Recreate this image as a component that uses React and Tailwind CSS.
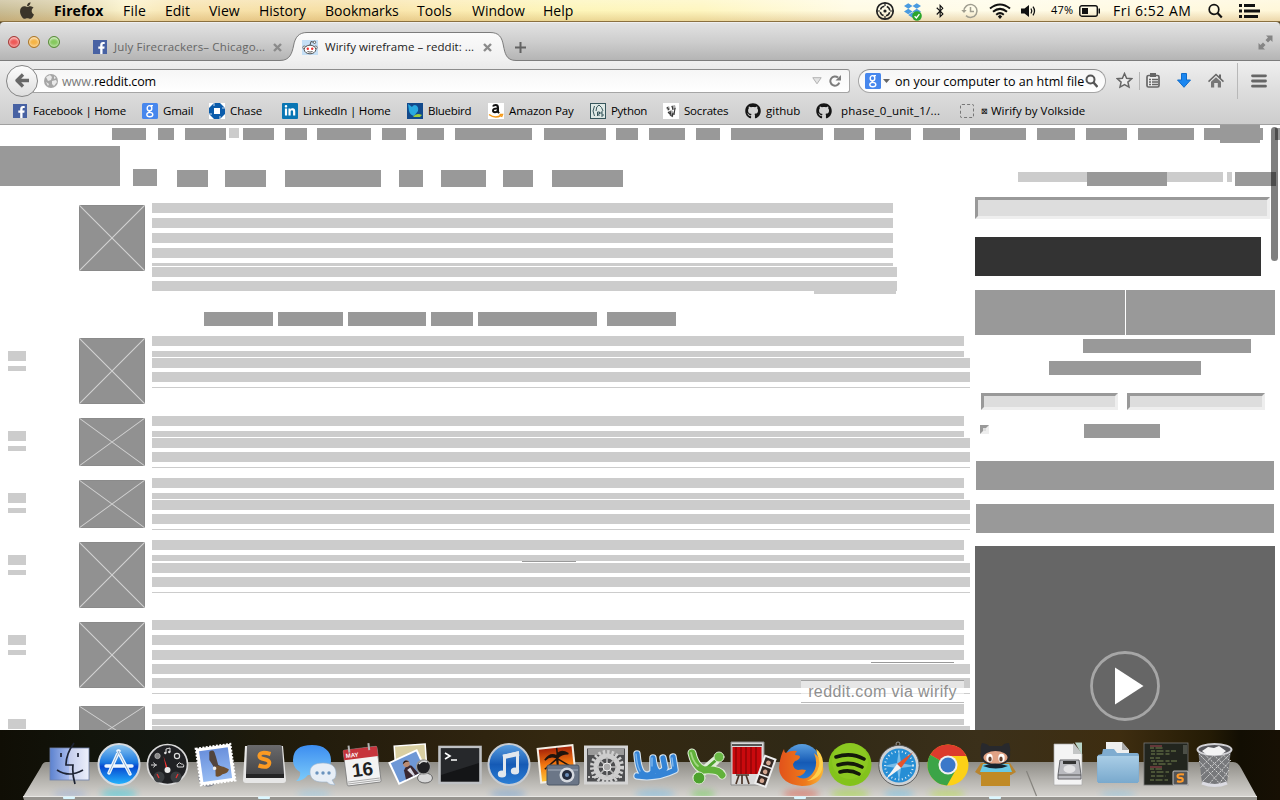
import React from "react";
import { FaApple, FaBluetoothB, FaWifi, FaDropbox, FaGithub, FaFacebookF, FaLinkedinIn } from "react-icons/fa";

/* ---------- menu bar ---------- */

const MENUS = [
  ["Firefox", "w-[69px] font-bold tracking-[0.1px]"],
  ["File", "w-[42px] tracking-[0.2px]"],
  ["Edit", "w-[44px]"],
  ["View", "w-[50px]"],
  ["History", "w-[66px]"],
  ["Bookmarks", "w-[92px]"],
  ["Tools", "w-[55px]"],
  ["Window", "w-[71px]"],
  ["Help", "w-[60px]"],
];

function MenuBar() {
  return (
    <header className="flex h-[22px] shrink-0 items-center border-b border-[#8a7040] bg-[linear-gradient(180deg,rgba(255,255,255,.25),rgba(255,255,255,0)_50%,rgba(180,120,30,.25)),linear-gradient(90deg,#c9bd96_0px,#d8cca4_60px,#fbf3cc_125px,#f7e2ad_190px,#f6dfa4_330px,#fbeab2_430px,#fdf5b9_560px,#fef6c0_700px,#fffbe4_850px,#fffce9_1000px,#fff7d9_1280px)] text-[14px] text-black">
      <FaApple className="ml-[18px] h-[19px] w-[18px] text-[#3b352a]" />
      <nav className="ml-[18px] flex leading-5">
        {MENUS.map(([t, c]) => (
          <span key={t} className={"whitespace-nowrap " + c}>{t}</span>
        ))}
      </nav>
      <div className="ml-auto flex h-full items-center">
        <svg className="h-[20px] w-[20px]" viewBox="0 0 20 20" fill="none" stroke="#222">
          <circle cx="10" cy="10" r="8.2" strokeWidth="1.7" />
          <circle cx="10" cy="10" r="4.800" strokeWidth="1.500" strokeDasharray="5 2.540" strokeDashoffset="-1.270" />
          <path d="M10 2v3M10 15v3M2 10h3M15 10h3" strokeWidth="1.2" />
          <circle cx="10" cy="10" r="1.6" fill="#222" stroke="none" />
        </svg>
        <div className="relative ml-[9px] h-[18px] w-[18px]">
          <FaDropbox className="h-[17px] w-[17px] text-[#4a9be0]" />
          <svg className="absolute right-0 bottom-[-1px] h-[10px] w-[10px]" viewBox="0 0 10 10">
            <circle cx="5" cy="5" r="4.8" fill="#2ca52c" />
            <path d="M2.6 5.2l1.8 1.8 3-3.8" stroke="#fff" strokeWidth="1.3" fill="none" />
          </svg>
        </div>
        <FaBluetoothB className="ml-[13px] h-[14px] w-[10px] text-[#111]" />
        <svg className="ml-[16px] h-[18px] w-[18px]" viewBox="0 0 18 18" fill="none" stroke="#a09e90" strokeWidth="1.5">
          <path d="M3 9a6.5 6.5 0 1 1 2 4.6" />
          <path d="M9.500 5v4.500h3.500" />
          <path d="M.3 8l2.700 3 2.700-3z" fill="#a09e90" stroke="none" />
        </svg>
        <svg className="ml-[10px] h-[16px] w-[22px]" viewBox="0 0 22 16" fill="none" stroke="#111" strokeWidth="2">
          <path d="M1 5.500Q11-2.500 21 5.500M4 8.700Q11 3 18 8.700M7.200 11.700Q11 8.500 14.800 11.700" />
          <path d="M11 11.800l2.200 1.700L11 16l-2.200-2.500z" fill="#111" stroke="none" />
        </svg>
        <svg className="ml-[10px] h-[14px] w-[16px]" viewBox="0 0 16 14">
          <path d="M0 4.500h3.500L8 1v12L3.500 9.500H0z" fill="#111" />
          <path d="M10 4.500q1.600 2.500 0 5M12 2.700q3 4.300 0 8.600" stroke="#111" strokeWidth="1.300" fill="none" />
        </svg>
        <span className="ml-[14px] w-[28px] text-[11px] tracking-[0.2px]">47%</span>
        <svg className="h-[12px] w-[22px]" viewBox="0 0 22 12">
          <rect x=".8" y=".8" width="17.500" height="10.400" rx="2" fill="none" stroke="#111" strokeWidth="1.400" />
          <rect x="3" y="3" width="6" height="6" fill="#111" />
          <path d="M19.500 3.500h1.500v5h-1.500z" fill="#111" />
        </svg>
        <span className="ml-[12px] w-[94px] tracking-[0.5px] whitespace-nowrap">Fri 6:52 AM</span>
        <svg className="h-[16px] w-[16px]" viewBox="0 0 16 16" fill="none" stroke="#111">
          <circle cx="7" cy="6.500" r="4.800" strokeWidth="1.700" />
          <path d="M10.500 10l4.300 4.500" strokeWidth="2.200" />
        </svg>
        <svg className="mr-[20px] ml-[16px] h-[14px] w-[21px]" viewBox="0 0 21 14" fill="#111">
          <path d="M0 0h3v3H0zM0 5.500h3v3H0zM0 11h3v3H0zM5 0h11v3H5zM5 5.500h16v3H5zM5 11h14v3H5z" />
        </svg>
      </div>
    </header>
  );
}

/* ---------- browser chrome ---------- */

function Fb() {
  return (
    <span className="flex h-[14px] w-[14px] shrink-0 items-end justify-end bg-[#4862a3] pr-[1px]">
      <FaFacebookF className="h-[12px] w-[9px] text-white" />
    </span>
  );
}

function GoogleG() {
  return (
    <svg className="h-[16px] w-[16px] shrink-0" viewBox="0 0 16 16">
      <rect width="16" height="16" rx="1.500" fill="#4787ed" />
      <g fill="none" stroke="#fff" strokeWidth="1.400">
        <ellipse cx="7.500" cy="5.200" rx="2.300" ry="2.600" />
        <path d="M8.500 2.600h2.500M8 7.700q-2 1 .3 2" />
        <ellipse cx="7.800" cy="11.600" rx="3" ry="2.200" />
      </g>
    </svg>
  );
}

function CloseX() {
  return (
    <svg className="h-[9px] w-[9px] shrink-0" viewBox="0 0 9 9">
      <path d="M1 1l7 7M8 1L1 8" stroke="#8b8b8b" strokeWidth="2.400" />
    </svg>
  );
}

const Light = ({ c }) => <span className={"h-[12px] w-[12px] rounded-full border shadow-[inset_0_2px_2px_rgba(255,255,255,.6),inset_0_-2px_2px_rgba(255,255,255,.35)] " + c} />;

function TabStrip() {
  return (
    <div className="relative flex h-[39px] shrink-0 rounded-t-[4px] border-t border-[#efefef] bg-[linear-gradient(180deg,#e2e2e2,#cdcdcd_50%,#b3b3b3)] text-[11.500px]">
      <svg className="absolute top-[-1px] left-0 h-[39px] w-[1280px]" viewBox="0 0 1280 39">
        <defs>
          <linearGradient id="tab" x1="0" x2="0" y1="0" y2="1">
            <stop offset="0" stopColor="#fbfbfb" />
            <stop offset="1" stopColor="#efefef" />
          </linearGradient>
        </defs>
        <path
          d="M-2 38.500H280C290 38.500 292 31 293.500 24C295 15 299 10.500 307 10.500H490C499 10.500 502 15 503.500 24C505 31 506 38.500 516 38.500H1282V41H-2Z"
          fill="url(#tab)"
          stroke="#7c7c7c"
        />
      </svg>
      <div className="relative flex w-full items-center">
        <div className="mb-[1px] ml-[8px] flex w-[85px] gap-[8px]">
          <Light c="border-[#a03c38] bg-[#ee5a58]" />
          <Light c="border-[#a8752a] bg-[#f5b445]" />
          <Light c="border-[#5a8a3c] bg-[#86c95e]" />
        </div>
        <div className="mt-[10px] flex w-[209px] items-center">
          <Fb />
          <span className="ml-[7px] w-[159px] tracking-[0.16px] whitespace-nowrap text-[#666]">July Firecrackers– Chicago...</span>
          <CloseX />
        </div>
        <div className="mt-[10px] flex items-center">
          <svg className="h-[15px] w-[16px]" viewBox="0 0 16 15">
            <rect width="16" height="15" fill="#c5dff5" />
            <path d="M8 5l1-3.500 3 .8" fill="none" stroke="#444" strokeWidth=".9" />
            <circle cx="2.300" cy="7.500" r="1.500" fill="#fff" stroke="#555" strokeWidth=".8" />
            <circle cx="13.700" cy="7.500" r="1.500" fill="#fff" stroke="#555" strokeWidth=".8" />
            <ellipse cx="8" cy="9.500" rx="5.800" ry="4.300" fill="#fff" stroke="#444" strokeWidth=".9" />
            <circle cx="12.500" cy="2.300" r="1.200" fill="#fff" stroke="#444" strokeWidth=".8" />
            <circle cx="5.800" cy="8.700" r="1.200" fill="#e33" />
            <circle cx="10.200" cy="8.700" r="1.200" fill="#e33" />
            <path d="M5.500 11.500q2.500 1.200 5 0" fill="none" stroke="#444" strokeWidth=".9" />
          </svg>
          <span className="ml-[7px] w-[158px] tracking-[0.04px] whitespace-nowrap text-[#222]">Wirify wireframe – reddit: ...</span>
          <CloseX />
          <svg className="mt-[1px] ml-[23px] h-[11px] w-[11px]" viewBox="0 0 11 11">
            <path d="M5.500 0v11M0 5.500h11" stroke="#636363" strokeWidth="2" />
          </svg>
        </div>
        <svg className="mr-[7px] ml-auto h-[15px] w-[15px]" viewBox="0 0 15 15" fill="#858585">
          <path d="M8 .5h6.500V7l-2-2-2.500 2.500L7.500 5 10 2.500zM.5 8l2 2L5 7.500 7.500 10 5 12.500l2 2H.5z" />
        </svg>
      </div>
    </div>
  );
}

function Toolbar() {
  return (
    <div className="flex h-[38px] shrink-0 items-center pt-[1px] text-[12.500px]">
      <div className="relative z-10 ml-[6px] flex h-[32px] w-[32px] shrink-0 items-center justify-center rounded-full border border-[#858585] bg-[linear-gradient(180deg,#fdfdfd,#dedede)]">
        <svg className="h-[15px] w-[15px]" viewBox="0 0 15 15">
          <path d="M8 1.500L2 7.500l6 6M2.500 7.500H14" fill="none" stroke="#686868" strokeWidth="3.300" strokeLinejoin="round" />
        </svg>
      </div>
      <div className="ml-[-5px] flex h-[24px] w-[817px] shrink-0 items-center rounded-r-[3px] border border-[#a5a5a5] border-t-[#8c8c8c] bg-[linear-gradient(180deg,#f6f6f6,#fff)] pl-[10px]">
        <svg className="h-[14px] w-[14px]" viewBox="0 0 14 14">
          <circle cx="7" cy="7" r="7" fill="#a6a6a6" />
          <path d="M2 3l4-2 2 2-1 3-3 1-1-2zM8 7l4-1 1 2-3 4-2-2zM10 2l2 2-2 1zM2 8l3 2-1 2z" fill="#e9e9e9" />
        </svg>
        <span className="mt-[3px] ml-[4px] tracking-[-0.12px] whitespace-nowrap text-[#7a7a7a]">www.<span className="text-black">reddit.com</span></span>
        <svg className="ml-auto h-[8px] w-[10px]" viewBox="0 0 10 8">
          <path d="M.8.700h8.400L5 6.800z" fill="#e3e3e3" stroke="#b3b3b3" />
        </svg>
        <svg className="mr-[8px] ml-[7px] h-[12px] w-[12px]" viewBox="0 0 12 12">
          <path d="M10.300 7.600A4.600 4.600 0 1 1 9 2.600" fill="none" stroke="#7c7c7c" strokeWidth="2" />
          <path d="M12 0v5.500H6.500z" fill="#7c7c7c" />
        </svg>
      </div>
      <div className="ml-[8px] flex h-[24px] w-[248px] shrink-0 items-center rounded-full border border-[#a5a5a5] border-t-[#8c8c8c] bg-[linear-gradient(180deg,#f6f6f6,#fff)] pl-[6px]">
        <GoogleG />
        <svg className="ml-[2px] h-[4px] w-[7px]" viewBox="0 0 7 4"><path d="M0 0h7L3.500 4z" fill="#666" /></svg>
        <span className="mt-[3px] ml-[5px] w-[190px] whitespace-nowrap text-black">on your computer to an html file</span>
        <svg className="h-[14px] w-[13px]" viewBox="0 0 13 14" fill="none" stroke="#555">
          <circle cx="5.500" cy="5.500" r="4" strokeWidth="2" />
          <path d="M8.500 8.500l4 4.500" strokeWidth="2.500" />
        </svg>
      </div>
      <svg className="ml-[10px] h-[17px] w-[17px]" viewBox="0 0 17 17">
        <path d="M8.500 1.500l2.100 4.700 5.100.5-3.800 3.400 1.100 5-4.500-2.600L4 15.100l1.100-5L1.300 6.700l5.100-.5z" fill="#eee" stroke="#666" strokeWidth="1.500" />
      </svg>
      <span className="ml-[6px] h-[18px] w-px bg-[#b5b5b5]" />
      <svg className="ml-[6px] h-[15px] w-[14px]" viewBox="0 0 14 15">
        <rect x="1" y="2.500" width="12" height="11.500" rx="1.500" fill="#eee" stroke="#666" strokeWidth="1.700" />
        <path d="M4 0h6v4H4z" fill="#666" />
        <path d="M3 6.500h2M6 6.500h6M3 9h2M6 9h6M3 11.500h2M6 11.500h6" stroke="#666" strokeWidth="1.300" />
      </svg>
      <svg className="ml-[17px] h-[15px] w-[14px]" viewBox="0 0 14 15">
        <path d="M4.500.5h5v6.500h4L7 14.300.5 7h4z" fill="#1a86f0" stroke="#0f6ccb" />
      </svg>
      <svg className="ml-[17px] h-[15px] w-[16px]" viewBox="0 0 16 15">
        <path d="M8 .5L0 8l1 1.200 7-6.700 7 6.700L16 8l-3-2.800V1.500h-2v1.800z" fill="#666" />
        <path d="M3 8.800l5-4.600 5 4.600V14.500H9.800V10H6.200v4.500H3z" fill="#777" />
      </svg>
      <span className="ml-[13px] h-[36px] w-px bg-[#b8b8b8]" />
      <svg className="ml-[13px] h-[14px] w-[16px]" viewBox="0 0 16 14">
        <path d="M1.500 1.800h13M1.500 7h13M1.500 12.200h13" stroke="#666" strokeWidth="2.800" strokeLinecap="round" />
      </svg>
    </div>
  );
}

const Chase = () => (
  <svg className="h-[16px] w-[16px]" viewBox="0 0 16 16">
    <rect width="16" height="16" fill="#fff" />
    <path d="M5 0h6l5 5v6l-5 5H5l-5-5V5z" fill="#0b5cab" />
    <path d="M5 5h6v6H5z" fill="#fff" />
    <path d="M5 0v3M16 5h-3M11 16v-3M0 11h3" stroke="#fff" strokeWidth=".8" />
  </svg>
);
const LinkedIn = () => (
  <span className="flex h-[16px] w-[16px] items-center justify-center rounded-[1px] bg-[#0976b4]">
    <FaLinkedinIn className="h-[12px] w-[12px] text-white" />
  </span>
);
const Bluebird = () => (
  <svg className="h-[16px] w-[16px]" viewBox="0 0 16 16">
    <rect width="16" height="16" fill="#124a8c" />
    <path d="M1 1q3 2 4 3 1-2 3-2 4 1 3 6l-4 5q-4-1-5-5z" fill="#29a9e0" />
    <path d="M6 14q3-5 9-2l-2 2z" fill="#9ccb3b" />
  </svg>
);
const Amazon = () => (
  <svg className="h-[16px] w-[16px]" viewBox="0 0 16 16">
    <rect width="16" height="16" fill="#fff" />
    <path d="M5 3.500q.5-1.500 2.700-1.500T10 4.500V9l1.200 1M9.800 5.500q-4.800-.3-4.800 2 0 1.800 2 1.800T9.800 7.300" stroke="#111" strokeWidth="2" fill="none" />
    <path d="M1 11.500q6 4.500 12 1M11.500 11.500h3l-1 2.500" stroke="#f59a1b" strokeWidth="1.500" fill="none" />
  </svg>
);
const PythonBook = () => (
  <svg className="h-[16px] w-[16px]" viewBox="0 0 16 16">
    <rect x=".5" y=".5" width="15" height="15" fill="#dfe9e6" stroke="#37565c" />
    <path d="M4.500 3q-3 5 0 10M6 8q0-5 3-6q3 2 4 6M7.500 13V9h2v2h-2l2 2M13 9h-2v2h2v2h-2" fill="none" stroke="#37565c" strokeWidth="1" />
  </svg>
);
const Socrates = () => (
  <svg className="h-[16px] w-[16px]" viewBox="0 0 16 16">
    <rect width="16" height="16" fill="#fff" />
    <path d="M3 5l3-2 1 3-2 2zM8 3l4-1 1 4-2 1zM5 9l3-2 3 2-1 5-3-1z" fill="#aaa" />
    <path d="M4 4l2 3M9 3l1 4M12 5l-1 7M7 8l1 5M5 9l2 2M10 10l-1 4" stroke="#333" strokeWidth="1.100" />
  </svg>
);
const Dashed = () => <span className="h-[14px] w-[14px] rounded-[2px] border border-dashed border-[#777]" />;
const Git = () => <FaGithub className="h-[16px] w-[16px] text-[#151515]" />;

const BOOKMARKS = [
  [Fb, "Facebook | Home", "w-[129px] tracking-[-0.2px]", "ml-[6px]"],
  [GoogleG, "Gmail", "w-[67px] tracking-[-0.2px]", "ml-[5px]"],
  [Chase, "Chase", "w-[73px] tracking-[-0.1px]", "ml-[5px]"],
  [LinkedIn, "LinkedIn | Home", "w-[125px] tracking-[-0.2px]", "ml-[5px]"],
  [Bluebird, "Bluebird", "w-[81px] tracking-[-0.3px]", "ml-[5px]"],
  [Amazon, "Amazon Pay", "w-[102px] tracking-[-0.1px]", "ml-[5px]"],
  [PythonBook, "Python", "w-[73px] tracking-[-0.3px]", "ml-[5px]"],
  [Socrates, "Socrates", "w-[82px] tracking-[-0.2px]", "ml-[5px]"],
  [Git, "github", "w-[71px]", "ml-[5px]"],
  [Git, "phase_0_unit_1/...", "w-[144px] tracking-[0.23px]", "ml-[9px]"],
  [Dashed, "Wirify by Volkside", "w-[140px]", "ml-[7px]"],
];

function BookmarkBar() {
  return (
    <div className="flex flex-1 items-center border-b border-[#a0a0a0] pb-[1px] pl-[13px] text-[11.500px] text-black">
      {BOOKMARKS.map(([Icon, t, w, ml]) => (
        <span key={t} className={"flex shrink-0 items-center whitespace-nowrap " + w}>
          <Icon />
          {t.startsWith("Wirify") && <span className="ml-[7px] text-[8px]">⊠</span>}
          <span className={t.startsWith("Wirify") ? "ml-[3px]" : ml}>{t}</span>
        </span>
      ))}
    </div>
  );
}

/* ---------- wireframed page ---------- */

const TOP_LINKS = [
  "ml-[112px] w-[34px]", "ml-[12px] w-[16px]", "ml-[11px] w-[41px]",
  "ml-[3px] w-[10px] h-[10px] bg-[#ccc]",
  "ml-[4px] w-[31px]", "ml-[11px] w-[22px]", "ml-[10px] w-[54px]", "ml-[11px] w-[24px]",
  "ml-[11px] w-[27px]", "ml-[11px] w-[77px]", "ml-[12px] w-[62px]", "ml-[10px] w-[22px]",
  "ml-[11px] w-[36px]", "ml-[11px] w-[24px]", "ml-[11px] w-[92px]", "ml-[11px] w-[30px]",
  "ml-[11px] w-[36px]", "ml-[12px] w-[37px]", "ml-[10px] w-[56px]", "ml-[11px] w-[38px]",
  "ml-[11px] w-[41px]", "ml-[11px] w-[56px]", "ml-[10px] w-[59px]", "ml-[12px] w-[5px]",
];
const HEADER_TABS = [
  "ml-[13px] w-[24px] mt-[23px]", "ml-[20px] w-[31px] mt-[24px]", "ml-[17px] w-[41px] mt-[24px]",
  "ml-[19px] w-[96px] mt-[24px]", "ml-[18px] w-[24px] mt-[24px]", "ml-[18px] w-[45px] mt-[24px]",
  "ml-[17px] w-[30px] mt-[24px]", "ml-[19px] w-[71px] mt-[24px]",
];
const SORTS = ["w-[69px]", "ml-[5px] w-[65px]", "ml-[5px] w-[78px]", "ml-[5px] w-[42px]", "ml-[5px] w-[119px]", "ml-[10px] w-[69px]"];

const A = "w-[812px]";
const B = "w-[818px]";
const SHORT_LINES = [[A, "h-[10px]"], [A, "mt-[5px] h-[6px]"], [B, "mt-px h-[10px]"], [B, "mt-[4px] h-[10px]"], [B, "mt-[5px] h-px"]];
const POSTS = [
  { box: "h-[80px]", thumb: "h-[66px]", lines: SHORT_LINES },
  { box: "h-[62px]", thumb: "h-[48px]", lines: SHORT_LINES },
  { box: "h-[62px]", thumb: "h-[48px]", lines: SHORT_LINES },
  {
    box: "h-[80px]", thumb: "h-[66px]", mark: "left-[522px] top-[21px] w-[54px]",
    lines: [[A, "h-[10px]"], [A, "mt-[5px] h-[6px]"], [B, "mt-[2px] h-[10px]"], [B, "mt-[4px] h-[10px]"], [B, "mt-[5px] h-px"]],
  },
  {
    box: "h-[84px]", thumb: "h-[66px]", mark: "left-[871px] top-[42px] w-[83px]",
    lines: [[A, "h-[10px]"], [A, "mt-[5px] h-[10px]"], [A, "mt-[5px] h-[10px]"], [B, "mt-[4px] h-[10px]"], [B, "mt-[4px] h-[10px]"], [B, "mt-[5px] h-px"]],
  },
  { box: "h-[80px]", thumb: "h-[43px]", lines: SHORT_LINES },
];
const PROMO_LINES = [
  "w-[741px] h-[10px]", "mt-[5px] w-[741px] h-[10px]", "mt-[5px] w-[741px] h-[10px]", "mt-[5px] w-[741px] h-[10px]",
  "mt-[5px] w-[741px] h-[3px]", "mt-px w-[745px] h-[10px]", "mt-[4px] w-[745px] h-[10px]", "ml-[662px] w-[82px] h-[3px]",
];

function Thumb({ h }) {
  return (
    <svg className={"mt-[2px] w-[66px] shrink-0 rounded-[1px] bg-[#919191] " + h} viewBox="0 0 66 66" preserveAspectRatio="none">
      <rect x=".5" y=".5" width="65" height="65" fill="none" stroke="#8a8a8a" />
      <path d="M0 0L66 66M66 0L0 66" stroke="#d2d2d2" strokeWidth="1.100" />
    </svg>
  );
}

function Post({ p }) {
  return (
    <article className={"relative flex shrink-0 items-start " + p.box}>
      <div className="mt-[15px] ml-[8px] w-[71px] shrink-0">
        <div className="h-[10px] w-[18px] bg-[#ccc]" />
        <div className="mt-[5px] h-[5px] w-[18px] bg-[#ccc]" />
      </div>
      <Thumb h={p.thumb} />
      <div className="ml-[7px]">
        {p.lines.map(([w, c], i) => <div key={i} className={"bg-[#ccc] " + w + " " + c} />)}
      </div>
      {p.mark && <span className={"absolute h-px bg-[#999] " + p.mark} />}
    </article>
  );
}

const Field = ({ c }) => <div className={"border-[3px] border-[#eee] border-t-[#999] border-l-[#999] bg-[#ddd] " + c} />;

function Sidebar() {
  return (
    <aside className="ml-[5px] w-[300px] shrink-0">
      <Field c="mt-[10px] h-[22px] w-[295px]" />
      <div className="mt-[18px] h-[39px] w-[286px] bg-[#333]" />
      <div className="mt-[14px] flex h-[45px] gap-px">
        <div className="w-[150px] bg-[#999]" />
        <div className="w-[149px] bg-[#999]" />
      </div>
      <div className="mt-[4px] ml-[108px] h-[14px] w-[168px] bg-[#999]" />
      <div className="mt-[8px] ml-[74px] h-[14px] w-[152px] bg-[#999]" />
      <div className="mt-[18px] ml-[6px] flex gap-[9px]">
        <Field c="h-[17px] w-[137px]" />
        <Field c="h-[17px] w-[138px]" />
      </div>
      <div className="mt-[14px] ml-[5px] flex h-[14px]">
        <Field c="mt-px h-[9px] w-[9px]" />
        <div className="ml-[95px] h-[14px] w-[76px] bg-[#999]" />
      </div>
      <div className="mt-[23px] ml-px h-[29px] w-[298px] bg-[#999]" />
      <div className="mt-[14px] ml-px h-[29px] w-[298px] bg-[#999]" />
      <div className="mt-[13px] flex h-[184px] justify-center bg-[#666] pt-[105px]">
        <svg className="h-[70px] w-[70px]" viewBox="0 0 70 70">
          <circle cx="35" cy="35" r="33.500" fill="none" stroke="#a6a6a6" strokeWidth="2.800" />
          <path d="M25 16.500v37L53.500 35z" fill="#fff" />
        </svg>
      </div>
    </aside>
  );
}

function Page() {
  return (
    <main className="relative flex h-[605px] w-[1280px] shrink-0 flex-col overflow-hidden bg-white">
      <div className="flex h-[18px] shrink-0 items-start overflow-hidden pt-[3px]">
        {TOP_LINKS.map((c, i) => <span key={i} className={"shrink-0 " + (i === 3 ? "" : "h-[12px] bg-[#999] ") + c} />)}
      </div>
      <span className="absolute top-0 left-[1220px] h-[18px] w-[40px] bg-[#999]" />
      <div className="mt-[3px] flex h-[41px] shrink-0 items-start">
        <div className="h-[40px] w-[120px] bg-[#999]" />
        {HEADER_TABS.map((c, i) => <span key={i} className={"h-[17px] bg-[#999] " + c} />)}
        <div className="mt-[26px] ml-[395px] flex w-[262px] items-start">
          <span className="h-[10px] w-[69px] bg-[#ccc]" />
          <span className="h-[14px] w-[80px] bg-[#999]" />
          <span className="h-[10px] w-[56px] bg-[#ccc]" />
          <span className="ml-[4px] h-[10px] w-[5px] bg-[#ccc]" />
          <span className="ml-[3px] h-[14px] w-[41px] bg-[#999]" />
        </div>
      </div>
      <div className="flex">
        <div className="w-[970px] shrink-0">
          <div className="mt-[16px] flex h-[109px] items-start pl-[79px]">
            <Thumb h="h-[66px]" />
            <div className="ml-[7px]">
              {PROMO_LINES.map((c, i) => <div key={i} className={"bg-[#ccc] " + c} />)}
            </div>
          </div>
          <div className="flex h-[24px] pl-[204px]">
            {SORTS.map((c, i) => <span key={i} className={"h-[14px] bg-[#999] " + c} />)}
          </div>
          {POSTS.map((p, i) => <Post key={i} p={p} />)}
        </div>
        <Sidebar />
      </div>
      <div className="absolute top-[555px] left-[801px] flex h-[23px] w-[163px] items-center justify-center border-t border-b border-t-[#a0a0a0] border-b-[#bbb] bg-white/50 font-['Liberation_Sans',sans-serif] text-[16px] leading-none tracking-[0.39px] whitespace-nowrap text-[#8f8f8f]">
        reddit.com via wirify
      </div>
      <span className="absolute top-[2px] left-[1271px] h-[134px] w-[7px] rounded-full bg-black/50" />
    </main>
  );
}

/* ---------- dock ---------- */

const ICONS = [
  /* Finder */
  <g>
    <rect x="4" y="7" width="39" height="32" fill="url(#finder)" stroke="#7182ab" strokeWidth=".8" />
    <path d="M28 2Q20 13 20 24h7q-1 9 2 19M11 29q12 8 26 0M15 12v4M32 12v4" fill="none" stroke="#1d2333" strokeWidth="1.700" />
  </g>,
  /* App Store */
  <g>
    <circle cx="24" cy="23.500" r="20.500" fill="url(#blue)" stroke="#d7dbe0" strokeWidth="2" />
    <path d="M24 10L14 32M23 10l12 23M11 25h26" stroke="#eef7ff" strokeWidth="3.400" strokeLinecap="round" />
    <path d="M24 10L14 32M23 10l12 23" stroke="#87a5c5" strokeWidth=".8" />
  </g>,
  /* Dashboard */
  <g>
    <circle cx="23.500" cy="23.500" r="20" fill="#202124" stroke="#d9d9d9" strokeWidth="1.700" />
    <circle cx="15" cy="36" r="5.500" fill="#3a3d40" /><circle cx="32" cy="36" r="5.500" fill="#3a3d40" />
    <circle cx="13.500" cy="15" r="2.700" fill="#888" stroke="#bbb" strokeWidth=".7" /><circle cx="33" cy="15" r="2.600" fill="none" stroke="#ddd" strokeWidth="1.200" />
    <path d="M22 12V8l4-1v4" stroke="#ddd" fill="none" /><circle cx="21.300" cy="12" r="1.200" fill="#ddd" /><circle cx="25.300" cy="11" r="1.200" fill="#ddd" />
    <path d="M7 24h6M9.500 21.500l2 2.500-2 2.500M33.500 26h6q1-3-2.200-3-2-2.500-3.500 0-1.500.5-.3 3z" stroke="#ddd" fill="none" />
    <path d="M15 37l-2-4M32 37l2-4" stroke="#e33" strokeWidth="1.200" />
    <path d="M19.500 15l2.800 14h2z" fill="#f33" /><circle cx="23.500" cy="29" r="3" fill="#e8e8e8" />
  </g>,
  /* Mail */
  <g>
    <circle cx="16" cy="36" r="9" fill="none" stroke="#888c96" strokeWidth="1.500" />
    <g transform="rotate(-8 24 23)">
      <rect x="6" y="5" width="35" height="37" fill="#fff" stroke="#fff" strokeWidth="2" strokeDasharray="2 1.400" />
      <rect x="9" y="8" width="29" height="31" fill="url(#mailsky)" />
      <path d="M19 10q4-2 5 1l1 5 1 8 4 3-4 4-4-4-4-9z" fill="#51443e" /><path d="M23 25q7 0 13 5-1 4-7 4-4 3-7 1z" fill="#6f5030" /><circle cx="22" cy="27" r="1.800" fill="#eee" />
    </g>
  </g>,
  /* Sublime Text */
  <g>
    <path d="M4 5h38l3 34q0 3-3 3H5q-3 0-3-3z" fill="#e6e6e6" /><path d="M7 4h32q2 0 2 2l2 27H5L6 6q0-2 1-2z" fill="url(#subl)" /><path d="M5 33h38v4H5z" fill="#242425" />
    <path d="M29.500 13q-10-3-11 1.500-.5 3 5 3.800 6 1.200 4.500 5-2 4.200-10.500 1.200" fill="none" stroke="#fb9a22" strokeWidth="4" />
  </g>,
  /* Messages */
  <g>
    <path d="M22 4c12 0 19 6 19 15S34 34 22 34h-4q-5 6-12 6 5-4 4-9Q3 27 3 19 3 4 22 4z" fill="url(#sky)" />
    <path d="M33 22c9 0 13 4 13 10 0 4-1 6-4 7l3 5q-6 0-8-3h-5c-8 0-12-4-12-10s5-9 13-9z" fill="#e7eef6" stroke="#9bb2cb" strokeWidth=".6" />
    <circle cx="27" cy="32" r="1.700" fill="#6a93be" /><circle cx="33" cy="32" r="1.700" fill="#6a93be" /><circle cx="39" cy="32" r="1.700" fill="#6a93be" />
  </g>,
  /* Calendar */
  <g transform="rotate(-7 24 24)">
    <rect x="6" y="7" width="34" height="36" rx="1.500" fill="#f3f3f3" stroke="#777" strokeWidth=".8" /><path d="M6 7h34v10H6z" fill="#c6343c" />
    <path d="M12 3v7M32 3v7" stroke="#b4b4b4" strokeWidth="2" /><path d="M7 41h32M7 39h32" stroke="#aaa" />
    <text x="8" y="15" fontSize="6" fontWeight="700" fill="#fff">MAY</text>
    <text x="23" y="35" textAnchor="middle" fontSize="19" fontWeight="700" fill="#222">16</text>
  </g>,
  /* Preview */
  <g>
    <rect x="8" y="4" width="31" height="24" fill="#d9cfa2" stroke="#fff" strokeWidth="1.500" transform="rotate(-4 24 16)" />
    <g transform="rotate(-25 22 26)"><rect x="5" y="13" width="32" height="25" fill="#fff" /><rect x="7" y="15" width="28" height="21" fill="#6e98d6" /><path d="M14 36l2-9q5-5 9-1l3 10z" fill="#3a2730" /><path d="M19 28l3 8h2l-1-9z" fill="#d6d6e2" /><circle cx="21" cy="22" r="3.300" fill="#b98a70" /><path d="M17.500 21q3-5 7 0l-3.500-1z" fill="#221a1c" /></g>
    <ellipse cx="38" cy="37" rx="7.500" ry="5" fill="#d7d7d7" stroke="#666" /><circle cx="36.500" cy="26" r="7" fill="#202023" stroke="#999" strokeWidth="1.300" /><path d="M32 23q3-4 8-2" stroke="#ddd" strokeWidth="1.500" fill="none" />
  </g>,
  /* Terminal */
  <g>
    <rect x="3.500" y="6" width="41" height="36" fill="#141517" stroke="#bfc1c4" strokeWidth="2.600" /><path d="M5 34L43 22V7.500H5z" fill="#26282b" />
    <path d="M9 12l5 3-5 3M15 19h6" stroke="#fff" strokeWidth="1.600" fill="none" />
  </g>,
  /* iTunes */
  <g>
    <circle cx="24" cy="23.500" r="20.500" fill="url(#blue2)" stroke="#c7ccd3" strokeWidth="2" />
    <path d="M19.500 33V15l13-3v18" fill="none" stroke="#e1e7ed" strokeWidth="3" /><path d="M18 16l16-3.500" stroke="#e1e7ed" strokeWidth="4.500" />
    <ellipse cx="17" cy="33" rx="4.200" ry="3.600" fill="#e1e7ed" /><ellipse cx="30" cy="30" rx="4.200" ry="3.600" fill="#e1e7ed" />
  </g>,
  /* iPhoto */
  <g>
    <g transform="rotate(-6 22 20)"><rect x="4" y="5" width="37" height="36" fill="#f4efe6" /><rect x="6" y="7" width="33" height="32" fill="url(#sunset)" /><path d="M23 34V17q-6-4-12 1 6-7 12-3 4-7 12-1-7-1-11 3zM23 18L10 27M24 18l12 9M24 17V7" stroke="#20140d" fill="#20140d" strokeWidth="1.500" /></g>
    <rect x="13" y="24" width="32" height="20" rx="2" fill="#6b7687" stroke="#4d5665" /><path d="M14 29h30" stroke="#a9b2bf" />
    <circle cx="33" cy="34" r="7.500" fill="#d5d9df" /><circle cx="33" cy="34" r="5" fill="#232a3c" /><circle cx="33" cy="34" r="2" fill="#6a8bb5" />
  </g>,
  /* System Preferences */
  <g>
    <rect x="3.500" y="6" width="41" height="36" fill="#4d4e50" stroke="#d5d5d5" strokeWidth="3" />
    <rect x="6" y="8" width="36" height="6" fill="#9a9a9a" />
    <circle cx="25" cy="26" r="15" fill="none" stroke="#d0d0d0" strokeWidth="4" strokeDasharray="2.400 2" /><circle cx="25" cy="26" r="11" fill="none" stroke="#cdcdcd" strokeWidth="5" /><path d="M25 16v20M15 26h20M18 19l14 14M32 19L18 33" stroke="#bbb" strokeWidth="1.500" /><circle cx="25" cy="26" r="4" fill="#aaa" stroke="#eee" />
    <path d="M6 36h36" stroke="#c8c8c8" strokeWidth="2" strokeDasharray="2 2" />
  </g>,
  /* Word */
  <g fill="none" strokeLinecap="round" strokeLinejoin="round">
    <path d="M6 13q1 14 5 19 6 5 11-1V17q1 11 5 14 5 1 7-4l-2-10M6 35q20 3 38-6l-2-13" stroke="#d5e3ef" strokeWidth="7.500" />
    <path d="M6 13q1 14 5 19 6 5 11-1V17q1 11 5 14 5 1 7-4l-2-10M6 35q20 3 38-6l-2-13" stroke="#3484d6" strokeWidth="5.300" />
    <path d="M5 13q1 12 4 17M21 17v8M41 17l1 8" stroke="#7fb8ee" strokeWidth="1.400" />
  </g>,
  /* Excel */
  <g fill="none" strokeLinecap="round" strokeLinejoin="round">
    <path d="M12 12q3 14 12 17 15-1 18 5M35 20L17 36" stroke="#e0ecd8" strokeWidth="9" />
    <path d="M35 20L17 36" stroke="#4da22e" strokeWidth="3" />
    <path d="M12 12q3 14 12 17 15-1 18 5" stroke="#62b23b" strokeWidth="7" /><path d="M11 12q2 9 7 13" stroke="#a4d884" strokeWidth="1.800" />
    <circle cx="39" cy="16" r="5" fill="#69b945" stroke="#d7e9cc" /><circle cx="19" cy="37" r="6" fill="#4da22e" stroke="#d7e9cc" />
  </g>,
  /* Photo Booth */
  <g>
    <path d="M2 1h33v43H2z" fill="#dadada" stroke="#8b8b8b" /><path d="M3.500 6h29v27h-29z" fill="#c9090d" /><path d="M7 6v27M12 6v27M17 6v27M22 6v27M27 6v27" stroke="#8c0407" strokeWidth="1.300" /><path d="M3 4h30" stroke="#555" strokeWidth="2" />
    <path d="M7 34h13M10 34l-3 9M17 34l3 9M13 34v9" stroke="#4b3528" strokeWidth="1.700" />
    <g transform="rotate(20 37 30)"><rect x="30" y="15" width="13" height="31" fill="#eee" /><path d="M32 17h9v8h-9zM32 26.500h9v8h-9zM32 36h9v8h-9z" fill="#342823" /><circle cx="36.500" cy="21.500" r="2.300" fill="#d3a690" /><circle cx="36.500" cy="31" r="2.300" fill="#d3a690" /><circle cx="36.500" cy="40.500" r="2.300" fill="#d3a690" /></g>
  </g>,
  /* Firefox */
  <g>
    <circle cx="25" cy="21.500" r="18.500" fill="url(#blue2)" />
    <path d="M7 8q0 3 2 4 5-3 11-2-2 2-2 4 5 0 5 2-1 3-5 4l-2 3q0 5 5 6 4-1 8 0-3 7-10 6 9 6 16-2 7-9 2-21 11 9 9 19-3 14-21 14Q3 43 2 27 3 15 7 8z" fill="url(#fox)" />
    <path d="M34 5q10 10 8 20-3 11-12 15 16-2 16-19-1-9-7-13 1 2 1 5-3-5-6-8z" fill="#ffcf4a" />
  </g>,
  /* Spotify */
  <g>
    <circle cx="24" cy="23.500" r="21.500" fill="#83c31b" /><circle cx="24" cy="20" r="18" fill="#93ce28" opacity=".5" />
    <path d="M10 16q15-5 28 2M12 24q12-4 24 2M14 31q10-3 19 2" fill="none" stroke="#14190a" strokeWidth="3.600" strokeLinecap="round" />
  </g>,
  /* Safari */
  <g>
    <circle cx="23" cy="3" r="2" fill="none" stroke="#999" /><circle cx="24" cy="24.500" r="18.500" fill="#268ed5" stroke="#cfd2d5" strokeWidth="3" /><circle cx="24" cy="24.500" r="20.200" fill="none" stroke="#555" strokeWidth=".9" />
    <circle cx="24" cy="24.500" r="14" fill="none" stroke="#dbe9f3" strokeWidth="2" strokeDasharray="1 2.600" /><path d="M24 8l2 14 14 3-14 2-2 14-2-14-14-2 14-3z" fill="#b2dcf5" opacity=".6" /><path d="M38 11L26 27l-4-4z" fill="#e4532c" /><path d="M11 38l11-15 4 4z" fill="#f4f4f4" />
  </g>,
  /* Chrome */
  <g>
    <circle cx="24" cy="24" r="20.500" fill="#fcd116" /><path d="M24 24L6.200 13.800A20.500 20.500 0 0 1 42.500 15H24z" fill="#dc3a2c" /><path d="M24 24L6.200 13.800A20.500 20.500 0 0 0 23 44.500l9-16z" fill="#3ba447" /><circle cx="24" cy="24" r="9.500" fill="#f0f0f0" /><circle cx="24" cy="24" r="7.500" fill="#3b78c9" />
  </g>,
  /* GitHub */
  <g>
    <path d="M3 31l6-9h29l6 9-5 3H8z" fill="#b8842f" /><path d="M9 31h29v14H9z" fill="#c08a26" /><path d="M11 23h26l3 8H8z" fill="#69c9e7" />
    <path d="M10 2q6 1 7 3h13q2-3 7-3 2 7 1 9 1 6-2 9-3 4-13 4T11 20Q7 15 9 11 8 5 10 2z" fill="#28292d" /><ellipse cx="23.500" cy="16.500" rx="12" ry="6.500" fill="#e0a285" /><ellipse cx="17.500" cy="17" rx="3.200" ry="4.200" fill="#fff" /><ellipse cx="29.500" cy="17" rx="3.200" ry="4.200" fill="#fff" /><ellipse cx="18" cy="18" rx="1.700" ry="2.500" fill="#643d2b" /><ellipse cx="29" cy="18" rx="1.700" ry="2.500" fill="#643d2b" /><path d="M11 25q12-5 25 0-12 5-25 0z" fill="#17232d" />
  </g>,
];

const RIGHT_ICONS = [
  <g>
    <path d="M9 3h20l8 10v31H9z" fill="#f4f4f4" stroke="#aaa" strokeWidth=".7" /><path d="M30 1.500h7V14z" fill="#b8d4c8" /><path d="M28 2v11h9z" fill="#c4c6c6" /><path d="M15 19h19l2 15v4H13v-4z" fill="#b9babf" stroke="#66676b" /><path d="M13 34h23" stroke="#555" /><rect x="18" y="20" width="13" height="3" fill="#333" /><ellipse cx="24.500" cy="28" rx="6" ry="4" fill="#e3e3e5" />
  </g>,
  <g>
    <path d="M12 1h16l7 8v8H12z" fill="#efefef" /><path d="M28 1v8h7z" fill="#aaa" /><path d="M4 14l4-1 1-5h11l3 4h20q2 0 2 3v26H3V17z" fill="#7facd0" /><path d="M3 16q0-1 1-1h40q1 0 1 1l-1 26H4z" fill="url(#folder)" />
  </g>,
  <g>
    <rect x="1" y="2" width="44" height="42" fill="#22251e" stroke="#777" strokeWidth=".8" /><path d="M7 7h14M8 10h25M8 13h20M7 17h10M8 20h26M10 23h20M7 28h12M8 31h18M8 35h15M7 39h18" stroke="#758351" strokeWidth="1.100" strokeDasharray="4 1.500 7 2" /><path d="M7 5h12M7 26h12" stroke="#a84a55" /><path d="M40 4h4v9h-4z" fill="#4c4f47" /><rect x="30" y="30" width="15" height="14" rx="1" fill="#525456" stroke="#ddd" strokeWidth=".8" /><path d="M41 33.500q-6-1-6.500 1.300t4 2.200q2 1 1 3.200-2 1-5.500 0" stroke="#ff9a2a" strokeWidth="2" fill="none" />
  </g>,
  <g>
    <path d="M7 9l4 33q13 5 25 0l4-33z" fill="#77787b" /><path d="M8 13l28 28M11 11l27 25M8 20l22 24M18 10l20 18M28 10l11 10M39 13L11 41M36 11L10 35M40 19L18 43M27 10L9 27M38 29L28 43" stroke="#ddd" strokeWidth=".9" strokeDasharray="2 1" /><ellipse cx="23.500" cy="8.500" rx="17" ry="5.500" fill="#545459" stroke="#d2d2d6" strokeWidth="2" /><path d="M11 10l6-4 6 1 5-2 7 5-5 4H16z" fill="#f3f3f4" /><path d="M11 42q13 5 25 0" fill="none" stroke="#dbdbe2" strokeWidth="3" />
  </g>,
];

function DockIcon({ children }) {
  return <svg className="h-[48px] w-[48px] shrink-0 overflow-visible font-['Liberation_Sans',sans-serif]" viewBox="0 0 48 48">{children}</svg>;
}

function Dock() {
  return (
    <footer className="relative h-[70px] shrink-0 overflow-hidden bg-[linear-gradient(90deg,#100e05,#12140b_90px,#141711_180px,#1e1a0b_260px,#2a200e_420px,#342810_550px,#302916_800px,#3b301a_980px,#3e2d10_1120px,#241b05_1210px,#120e03_1240px,#171004_1280px)]">
      <svg className="absolute inset-0 h-[70px] w-[1280px]" viewBox="0 0 1280 70">
        <defs>
          <linearGradient id="shelf" x1="0" x2="0" y1="0" y2="1">
            <stop offset="0" stopColor="#8e8c86" /><stop offset=".5" stopColor="#b4b2ad" /><stop offset="1" stopColor="#d6d4d0" />
          </linearGradient>
          <linearGradient id="finder"><stop offset="0" stopColor="#5c82cf" /><stop offset=".49" stopColor="#a8bbed" /><stop offset=".5" stopColor="#c4cdec" /><stop offset="1" stopColor="#edf0fb" /></linearGradient>
          <linearGradient id="blue" x1="0" x2="0" y1="0" y2="1"><stop offset="0" stopColor="#8fc8f0" /><stop offset=".45" stopColor="#1a78e0" /><stop offset=".55" stopColor="#0648d0" /><stop offset="1" stopColor="#25b8ff" /></linearGradient>
          <linearGradient id="blue2" x1="0" x2="0" y1="0" y2="1"><stop offset="0" stopColor="#5a9fe0" /><stop offset=".5" stopColor="#155ab5" /><stop offset="1" stopColor="#2b7fd6" /></linearGradient>
          <linearGradient id="mailsky" x1="0" x2="0" y1="0" y2="1"><stop offset="0" stopColor="#6a90dc" /><stop offset="1" stopColor="#96bbf2" /></linearGradient>
          <linearGradient id="subl" x1="0" x2="0" y1="0" y2="1"><stop offset="0" stopColor="#6a6a6c" /><stop offset="1" stopColor="#464648" /></linearGradient>
          <linearGradient id="sky" x1="0" x2="0" y1="0" y2="1"><stop offset="0" stopColor="#3c8df0" /><stop offset="1" stopColor="#7ccbfa" /></linearGradient>
          <linearGradient id="sunset" x1="0" x2="0" y1="0" y2="1"><stop offset="0" stopColor="#a72408" /><stop offset=".5" stopColor="#f47810" /><stop offset="1" stopColor="#ffc437" /></linearGradient>
          <linearGradient id="fox" x1="0" x2="1" y1="0" y2="0"><stop offset="0" stopColor="#e2521b" /><stop offset=".6" stopColor="#ee7a1b" /><stop offset="1" stopColor="#fbb635" /></linearGradient>
          <linearGradient id="folder" x1="0" x2="0" y1="0" y2="1"><stop offset="0" stopColor="#a9cde6" /><stop offset="1" stopColor="#79a9cd" /></linearGradient>
          <filter id="soft" x="-.5" y="-.5" width="2" height="2"><feGaussianBlur stdDeviation="3" /></filter>
        </defs>
        <path d="M46 32H1233Q1238 32 1241 38L1257 67H23L41 37Q43 32 46 32Z" fill="url(#shelf)" />
        <g filter="url(#soft)" opacity=".45">
          <ellipse cx="70" cy="64" rx="17" ry="4" fill="#90a9d9" /><ellipse cx="119" cy="64" rx="18" ry="5" fill="#24c9df" /><ellipse cx="314" cy="64" rx="17" ry="4" fill="#8cc8ea" />
          <ellipse cx="508" cy="64" rx="18" ry="4" fill="#5d96d2" /><ellipse cx="655" cy="64" rx="20" ry="4" fill="#5db6ed" /><ellipse cx="703" cy="64" rx="12" ry="4" fill="#55ce34" />
          <ellipse cx="801" cy="64" rx="18" ry="5" fill="#df4e37" /><ellipse cx="850" cy="64" rx="19" ry="5" fill="#9adb20" /><ellipse cx="899" cy="64" rx="15" ry="4" fill="#57bcec" /><ellipse cx="947" cy="64" rx="18" ry="4" fill="#aede27" /><ellipse cx="1118" cy="64" rx="18" ry="3" fill="#70bde8" />
        </g>
        <path d="M23 67H1257V70H24Z" fill="#96948f" />
        <path d="M23 66.500H1257" stroke="#e9e8e5" strokeWidth="1.200" />
        <path d="M1026.500 41L1036.500 66" stroke="#85837e" strokeWidth="1.200" />
        <g fill="#d9f6ff"><rect x="63" y="66.500" width="12" height="2.500" rx="1" /><rect x="258" y="66.500" width="12" height="2.500" rx="1" /><rect x="794" y="66.500" width="12" height="2.500" rx="1" /><rect x="989" y="66.500" width="12" height="2.500" rx="1" /></g>
      </svg>
      <div className="relative flex gap-[0.75px] pt-[11px] pl-[46px]">
        {ICONS.map((icon, i) => <DockIcon key={i}>{icon}</DockIcon>)}
        <div className="ml-[24px] flex gap-[0.75px]">
          {RIGHT_ICONS.map((icon, i) => <DockIcon key={i}>{icon}</DockIcon>)}
        </div>
      </div>
    </footer>
  );
}

export default function App() {
  return (
    <div className="flex h-[800px] w-[1280px] flex-col overflow-hidden bg-[#54482c] font-['Open_Sans','Noto_Sans',sans-serif]">
      <MenuBar />
      <TabStrip />
      <div className="flex h-[64px] shrink-0 flex-col bg-[linear-gradient(180deg,#efefef,#dedede_45%,#cccccc)]">
        <Toolbar />
        <BookmarkBar />
      </div>
      <Page />
      <Dock />
    </div>
  );
}
